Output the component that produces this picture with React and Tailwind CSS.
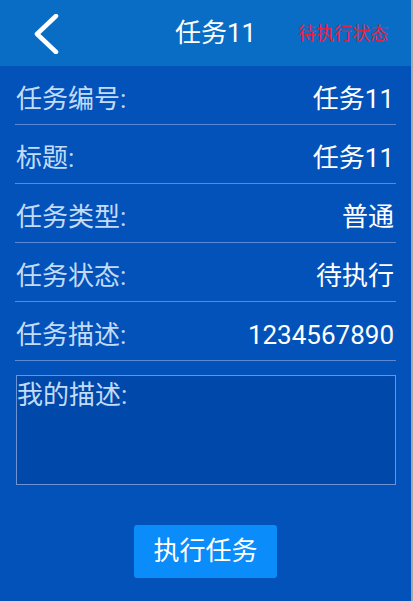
import React from "react";

const rows = [
  { label: "任务编号:", value: "任务11" },
  { label: "标题:", value: "任务11" },
  { label: "任务类型:", value: "普通" },
  { label: "任务状态:", value: "待执行" },
  { label: "任务描述:", value: "1234567890" },
];

function BackIcon() {
  return (
    <svg width="32" height="40" viewBox="0 0 32 40" fill="none">
      <path
        d="M26 2 L7 20 L26 38"
        stroke="white"
        strokeWidth="4.5"
        strokeLinecap="round"
        strokeLinejoin="round"
      />
    </svg>
  );
}

export default function App() {
  return (
    <div
      className="flex w-[413px] h-[601px] bg-[#0352ba]"
      style={{ fontFamily: 'Roboto, "Noto Sans CJK SC", sans-serif' }}
    >
      <div className="flex flex-col w-[411px]">
        {/* header */}
        <div className="flex items-center h-[66px] bg-[#0a6dc5]">
          <div className="pl-[30px] pt-[1px]">
            <BackIcon />
          </div>
          <div className="ml-[113px] text-[26px] text-white">任务11</div>
          <div className="ml-[42px] text-[18px] text-[#e8203c]">待执行状态</div>
        </div>

        {/* detail rows */}
        <div className="flex flex-col px-[15px]">
          {rows.map((r) => (
            <div
              key={r.label}
              className="flex items-center justify-between h-[59px] pt-2 border-b border-[#5a8ad6]"
            >
              <span className="pl-[1px] text-[26px] text-[#c2dbf7]">{r.label}</span>
              <span className="pr-[2px] text-[26px] text-white">{r.value}</span>
            </div>
          ))}

          <div className="mt-[14px] ml-[1px] h-[110px] border border-[#6d93d2] bg-[#0049ab]">
            <div className="text-[26px] leading-none pt-[6px] text-[#c2dbf7]">我的描述:</div>
          </div>
        </div>

        <div className="flex justify-center mt-[40px]">
          <button className="w-[143px] h-[53px] rounded-[3px] bg-[#0a8cfb] text-[26px] text-white">
            执行任务
          </button>
        </div>
      </div>
      <div className="w-[2px] bg-[#a7a7a7]" />
    </div>
  );
}
